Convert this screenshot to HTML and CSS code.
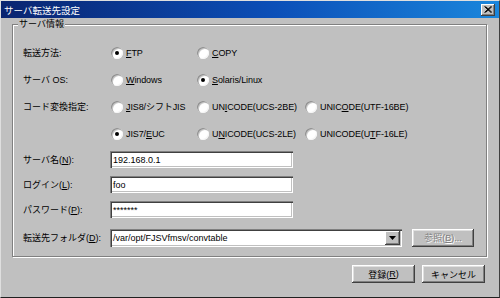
FILE: index.html
```html
<!DOCTYPE html>
<html lang="ja">
  <head>
    <title>サーバ転送先設定</title>
    <meta charset="UTF-8" />
    <link rel="stylesheet" href="styles.css">
  </head>
  <body>
    <div class="window">
      <div class="titlebar">
        <span class="title">サーバ転送先設定</span>
        <span class="close">
          <svg width="8" height="7" viewBox="0 0 8 7">
            <path d="M0.5 0.5 L7 6.5 M1.5 0.5 L8 6.5 M7 0.5 L0.5 6.5 M8 0.5 L1.5 6.5" stroke="#000" stroke-width="1" />
          </svg>
        </span>
      </div>

      <div class="content">
        <div class="group">
          <span class="legend">サーバ情報</span>

          <div class="radio-grid">
            <span class="label">転送方法:</span>
            <span class="opt"><i class="radio checked"></i><span><u>F</u>TP</span></span>
            <span class="opt"><i class="radio"></i><span><u>C</u>OPY</span></span>
            <span></span>

            <span class="label">サーバ OS:</span>
            <span class="opt"><i class="radio"></i><span><u>W</u>indows</span></span>
            <span class="opt"><i class="radio checked"></i><span><u>S</u>olaris/Linux</span></span>
            <span></span>

            <span class="label">コード変換指定:</span>
            <span class="opt"><i class="radio"></i><span><u>J</u>IS8/シフトJIS</span></span>
            <span class="opt"><i class="radio"></i><span>UN<u>I</u>CODE(UCS-2BE)</span></span>
            <span class="opt"><i class="radio"></i><span>UNIC<u>O</u>DE(UTF-16BE)</span></span>

            <span></span>
            <span class="opt"><i class="radio checked"></i><span>JIS7/<u>E</u>UC</span></span>
            <span class="opt"><i class="radio"></i><span>U<u>N</u>ICODE(UCS-2LE)</span></span>
            <span class="opt"><i class="radio"></i><span>UNICODE(U<u>T</u>F-16LE)</span></span>
          </div>

          <div class="field-row">
            <span class="label">サーバ名(<u>N</u>):</span>
            <span class="input">192.168.0.1</span>
          </div>
          <div class="field-row">
            <span class="label">ログイン(<u>L</u>):</span>
            <span class="input">foo</span>
          </div>
          <div class="field-row">
            <span class="label">パスワード(<u>P</u>):</span>
            <span class="input">*******</span>
          </div>
          <div class="field-row folder-row">
            <span class="label">転送先フォルダ(<u>D</u>):</span>
            <span class="combo">
              <span class="combo-text">/var/opt/FJSVfmsv/convtable</span>
              <span class="combo-btn">
                <svg width="7" height="4" viewBox="0 0 7 4"><path d="M0 0 H7 L3.5 4 Z" fill="#000" /></svg>
              </span>
            </span>
            <span class="btn disabled">参照(<u>B</u>)...</span>
          </div>
        </div>

        <div class="actions">
          <span class="btn">登録(<u>R</u>)</span>
          <span class="btn">キャンセル</span>
        </div>
      </div>
    </div>
  </body>
</html>
```

FILE: styles.css
```css
body {
  margin: 0;
  font-family: "Liberation Sans", "Noto Sans CJK JP", sans-serif;
  font-size: 9px;
  color: #000;
  background: #c0c0c0;
}

.window {
  box-sizing: border-box;
  width: 500px;
  height: 298px;
  background: #c0c0c0;
  border: 1px solid;
  border-color: #dfdfdf #404040 #202020 #dfdfdf;
}

.titlebar {
  height: 17px;
  display: flex;
  align-items: center;
  justify-content: space-between;
  padding: 0 4px 0 3px;
  background: linear-gradient(to right, #0a2470, #0b4fb8 55%, #1a86dc);
}

.title {
  color: #fff;
  font-size: 9.5px;
}

.close {
  box-sizing: border-box;
  width: 14px;
  height: 12px;
  display: flex;
  align-items: center;
  justify-content: center;
  background: #c0c0c0;
  box-shadow: inset -1px -1px 0 #404040, inset 1px 1px 0 #fff, inset -2px -2px 0 #808080;
}

.content {
  padding: 6px 14px 0 11px;
}

.group {
  position: relative;
  box-sizing: border-box;
  width: 475px;
  height: 233px;
  padding: 14px 0 0 10px;
  border: 1px solid #808080;
  box-shadow: inset 1px 1px 0 #fff, 1px 1px 0 #fff;
}

.legend {
  position: absolute;
  top: -7px;
  left: 5px;
  padding: 0 1px;
  background: #c0c0c0;
  line-height: 12px;
}

.radio-grid {
  display: grid;
  grid-template-columns: 88px 86px 108px auto;
  grid-auto-rows: 27px;
  align-items: center;
}

.opt {
  display: flex;
  align-items: center;
  white-space: nowrap;
  letter-spacing: -0.1px;
}

.radio {
  position: relative;
  flex: none;
  width: 12px;
  height: 12px;
  margin-right: 3px;
  border-radius: 50%;
  background: #fff;
  box-shadow: inset 1px 1px 0 #909090, inset 2px 2px 0 #c8c8c8, inset -1px -1px 0 #f4f4f4;
}

.radio.checked::after {
  content: "";
  position: absolute;
  left: 4px;
  top: 4px;
  width: 4px;
  height: 4px;
  border-radius: 50%;
  background: #000;
}

.field-row {
  display: flex;
  align-items: center;
  height: 25px;
}

.field-row .label {
  width: 87px;
  flex: none;
}

.input,
.combo {
  box-sizing: border-box;
  height: 17px;
  display: flex;
  align-items: center;
  background: #fff;
  padding-left: 3px;
  box-shadow: inset 1px 1px 0 #808080, inset 2px 2px 0 #404040, inset -1px -1px 0 #fff, inset -2px -2px 0 #c0c0c0;
}

.input {
  width: 183px;
}

.folder-row {
  margin-top: 3px;
}

.combo {
  width: 292px;
  height: 18px;
  padding-right: 2px;
  justify-content: space-between;
}

.combo-btn {
  box-sizing: border-box;
  width: 15px;
  height: 14px;
  display: flex;
  align-items: center;
  justify-content: center;
  background: #c0c0c0;
  box-shadow: inset -1px -1px 0 #404040, inset 1px 1px 0 #fff, inset -2px -2px 0 #808080;
}

.btn {
  box-sizing: border-box;
  width: 63px;
  height: 18px;
  display: flex;
  align-items: center;
  justify-content: center;
  background: #c0c0c0;
  box-shadow: inset -1px -1px 0 #404040, inset 1px 1px 0 #fff, inset -2px -2px 0 #808080, inset 2px 2px 0 #dfdfdf;
}

.btn.disabled {
  width: 62px;
  margin-left: 10px;
  color: #808080;
  text-shadow: 1px 1px 0 #fff;
}

.actions {
  display: flex;
  justify-content: flex-end;
  gap: 7px;
  margin-top: 8px;
}
```
